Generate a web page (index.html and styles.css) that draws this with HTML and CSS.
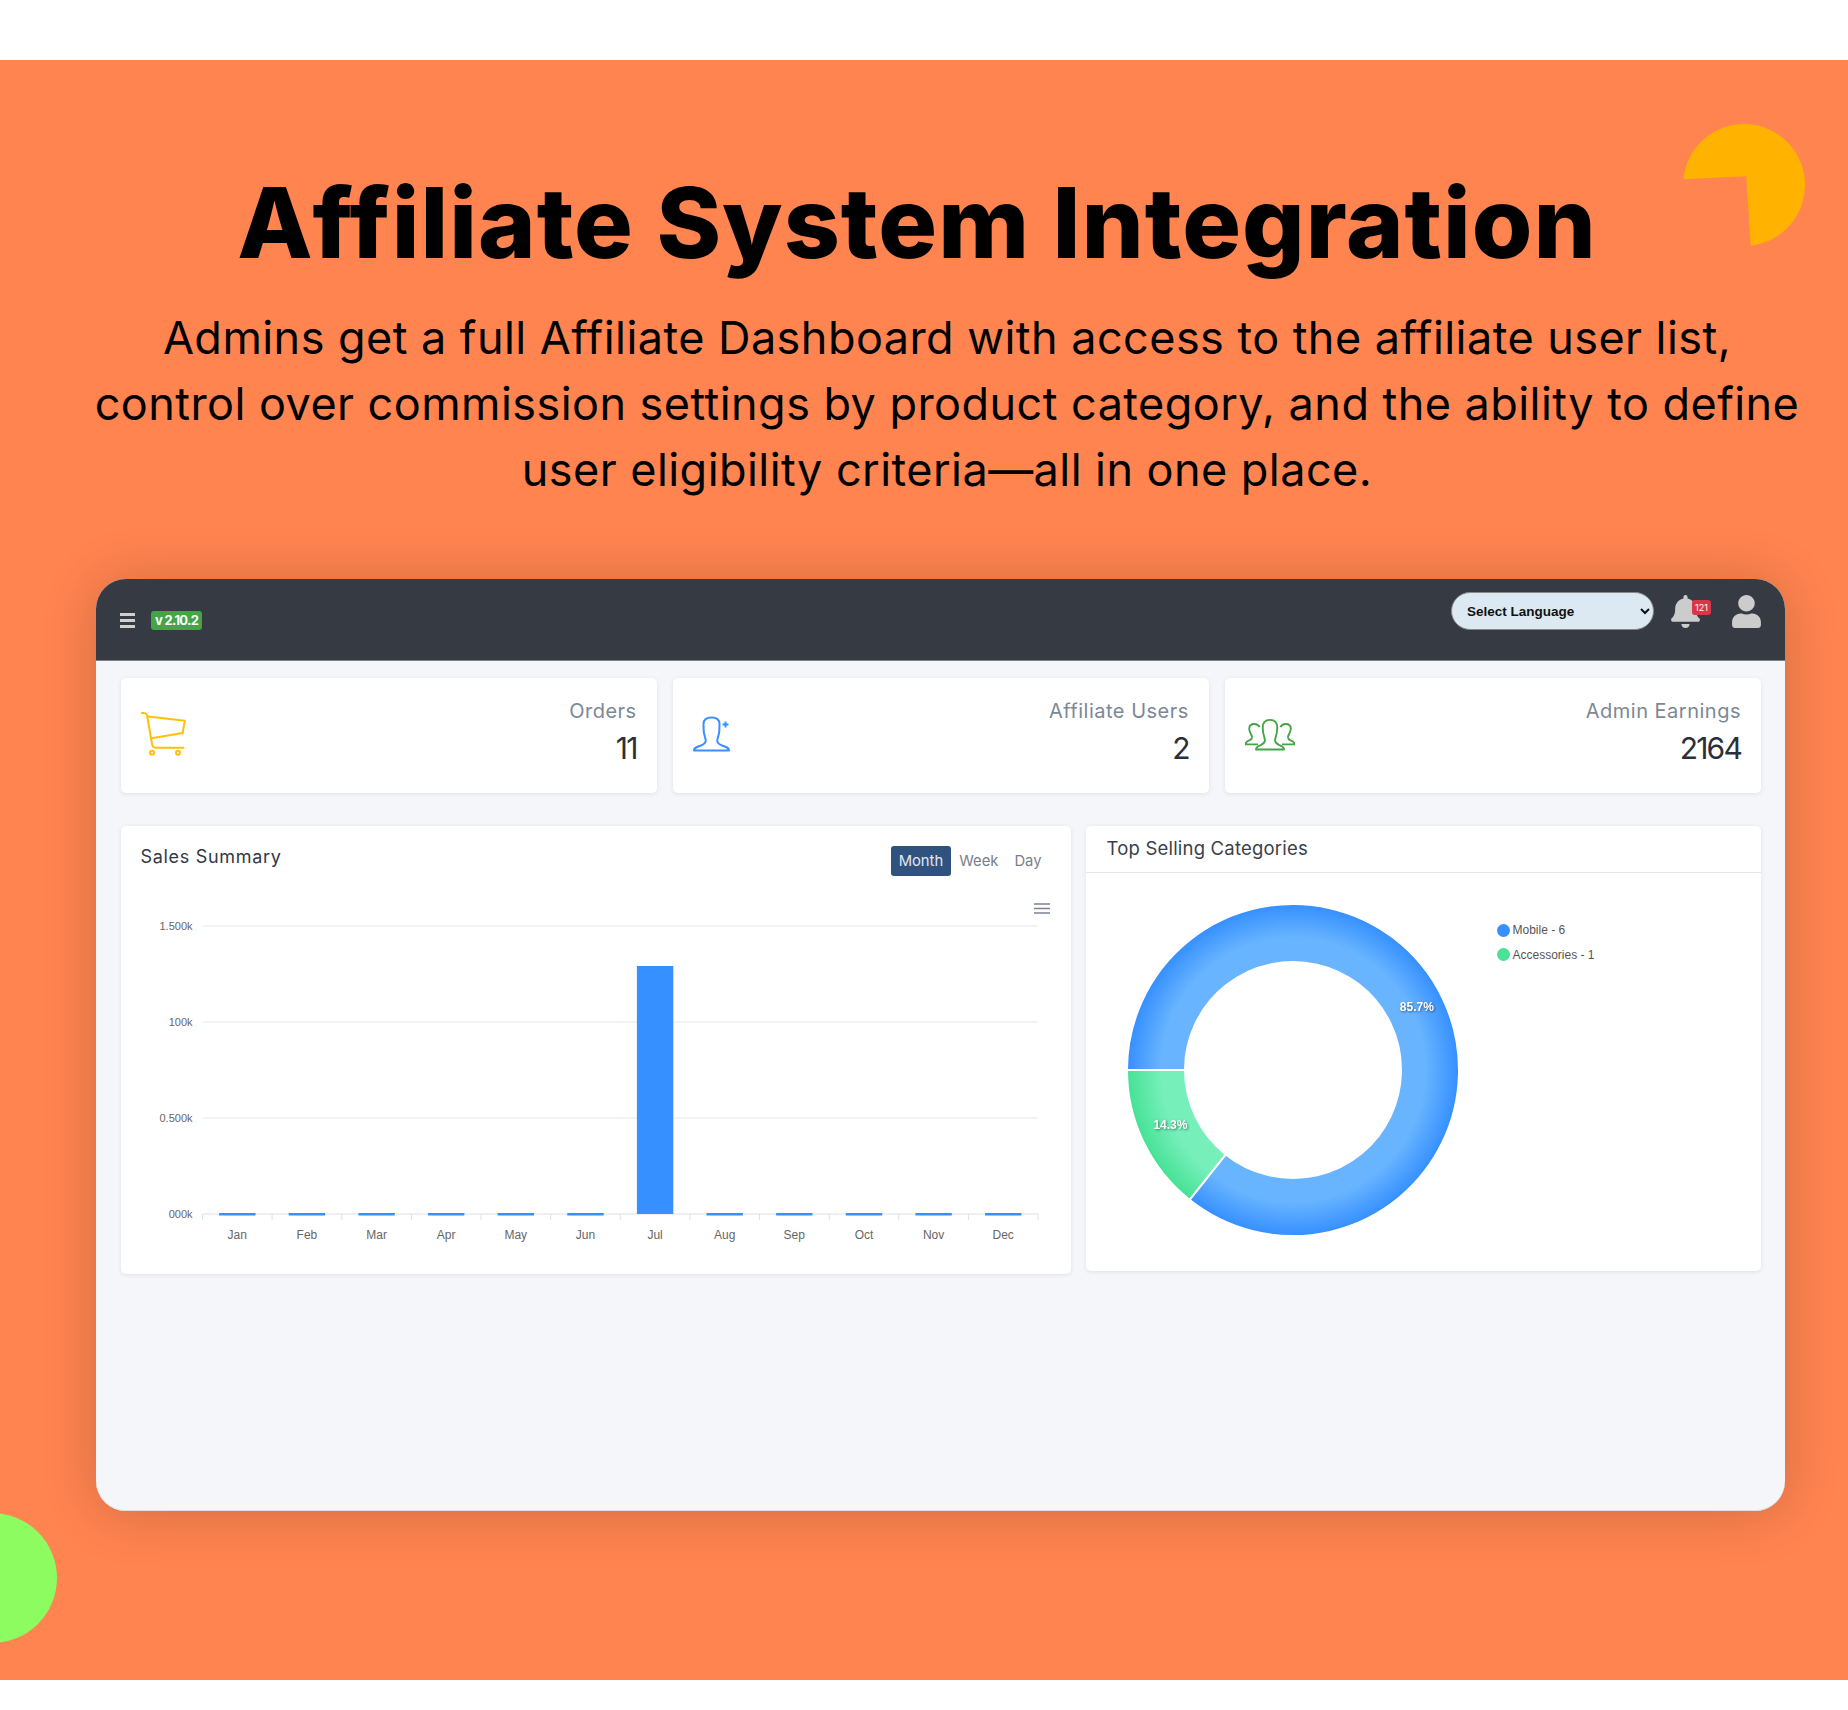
FILE: index.html
```html
<!DOCTYPE html>
<html lang="en">
<head>
    <meta charset="UTF-8">
    <meta name="viewport" content="width=device-width, initial-scale=1.0">
    <title>Affiliate System Integration</title>
    <link rel="stylesheet" href="styles.css">
</head>
<body>
    <section class="hero">
        <svg class="shapeYellow" viewBox="0 0 124 124" width="124" height="124">
            <path d="M63.3 53.3 L0.3 56.3 A61 61 0 1 1 67.7 122.7 Z" fill="#ffb300"/>
        </svg>
        <div class="shapeGreen"></div>

        <h1 class="heroTitle">Affiliate System Integration</h1>
        <p class="heroText">Admins get a full Affiliate Dashboard with access to the affiliate user list,<br>control over commission settings by product category, and the ability to define<br>user eligibility criteria—all in one place.</p>

        <div class="panel">
            <header class="topbar">
                <div class="topbarLeft">
                    <div class="bars"><span></span><span></span><span></span></div>
                    <span class="version">v 2.10.2</span>
                </div>
                <div class="topbarRight">
                    <select class="langSelect">
                        <option>Select Language</option>
                    </select>
                    <div class="bell">
                        <svg viewBox="0 0 448 512" width="29" height="33"><path fill="#cccccc" d="M224 512c35.32 0 63.97-28.65 63.97-64H160.03c0 35.35 28.65 64 63.97 64zm215.39-149.71c-19.32-20.76-55.47-51.99-55.47-154.29 0-77.7-54.48-139.9-127.94-155.16V32c0-17.67-14.32-32-31.98-32s-31.98 14.33-31.98 32v20.84C118.56 68.1 64.08 130.3 64.08 208c0 102.3-36.15 133.53-55.47 154.29-6 6.45-8.66 14.16-8.61 21.71.11 16.4 12.98 32 32.1 32h383.8c19.12 0 32-15.6 32.1-32 .05-7.55-2.61-15.27-8.61-21.71z"/></svg>
                        <span class="bellBadge">121</span>
                    </div>
                    <svg viewBox="0 0 448 512" width="29" height="33"><path fill="#cccccc" d="M224 256c70.7 0 128-57.3 128-128S294.7 0 224 0 96 57.3 96 128s57.3 128 128 128zm89.6 32h-16.7c-22.2 10.2-46.9 16-72.9 16s-50.6-5.8-72.9-16h-16.7C60.2 288 0 348.2 0 422.4V464c0 26.5 21.5 48 48 48h352c26.5 0 48-21.5 48-48v-41.6c0-74.2-60.2-134.4-134.4-134.4z"/></svg>
                </div>
            </header>

            <div class="content">
                <div class="stats">
                    <div class="card statCard">
                        <svg class="statIcon" viewBox="10 12 48 47" width="48" height="47" fill="none" stroke="#ffc107" stroke-width="2" stroke-linecap="round" stroke-linejoin="round">
                            <path d="M11 12.9 C13.5 12.9 15.3 13.2 16 15 L21 44 C21.3 46.5 22.3 47.7 24.5 47.7 L52.5 47.7"/>
                            <path d="M17 16.5 L53.7 20.7 L51.7 33 L20.5 38.3"/>
                            <circle cx="21" cy="52.7" r="2"/>
                            <circle cx="47" cy="52.7" r="2"/>
                        </svg>
                        <div class="statText">
                            <div class="statLabel">Orders</div>
                            <div class="statValue">11</div>
                        </div>
                    </div>
                    <div class="card statCard">
                        <svg class="statIcon" viewBox="8 7 42 44" width="42" height="44" fill="none" stroke="#3690ff" stroke-width="2" stroke-linejoin="round">
                            <path d="M9 43.5 C9 41 11 40 16 38.5 C19.5 37 21 35 20.7 33 C20.3 30 19 28 18.7 24 L18.5 17 C18.5 12.5 21.5 10.5 26.5 10.5 C31.5 10.5 34.5 12.5 34.5 17 L34.3 24 C34 28 32.7 30 32.3 33 C32 35 33.5 37 37 38.5 C42 40 44 41 44 43.5 Z"/>
                            <path d="M37.5 17.5 H43.5 M40.5 14.5 V20.5"/>
                        </svg>
                        <div class="statText">
                            <div class="statLabel">Affiliate Users</div>
                            <div class="statValue">2</div>
                        </div>
                    </div>
                    <div class="card statCard">
                        <svg class="statIcon" viewBox="9.5 5 48 50" width="50" height="52" fill="none" stroke="#43a547" stroke-width="1.8" stroke-linejoin="round">
                            <path d="M20 43 C20 41 21 40 25 38.5 C28 37 29 35 28.5 33 C27.5 30 26.5 27 26.5 22 C26.5 17 29 14.5 33.5 14.5 C38 14.5 40.5 17 40.5 22 C40.5 27 39.5 30 38.5 33 C38 35 39 37 42 38.5 C46 40 47 41 47 43 Z"/>
                            <path d="M22 38 L10 38 C10 36 11 35 14 34 C16.5 33 16.5 32 16 30 C15 28 13.5 25 13.5 23 C13.5 20 15.5 18.5 18.5 18.5 C20.5 18.5 22.5 19.5 23.5 21.5"/>
                            <path d="M45 38 L57 38 C57 36 56 35 53 34 C50.5 33 50.5 32 51 30 C52 28 53.5 25 53.5 23 C53.5 20 51.5 18.5 48.5 18.5 C46.5 18.5 44.5 19.5 43.5 21.5"/>
                        </svg>
                        <div class="statText">
                            <div class="statLabel">Admin Earnings</div>
                            <div class="statValue">2164</div>
                        </div>
                    </div>
                </div>

                <div class="charts">
                    <div class="card salesCard">
                        <div class="salesHead">
                            <h3 class="salesTitle">Sales Summary</h3>
                            <div class="tabs">
                                <span class="tab tabActive">Month</span>
                                <span class="tab">Week</span>
                                <span class="tab">Day</span>
                            </div>
                        </div>
                        <svg class="salesChart" viewBox="0 0 950 398" width="950" height="398">
                            <g class="grid">
                                <path d="M81.5 50 H917 M81.5 146 H917 M81.5 242 H917"/>
                            </g>
                            <g class="axis">
                                <path d="M81.5 338 H917"/>
                                <path d="M81.5 338 v6 M151.1 338 v6 M220.8 338 v6 M290.4 338 v6 M360 338 v6 M429.7 338 v6 M499.3 338 v6 M568.9 338 v6 M638.5 338 v6 M708.2 338 v6 M777.8 338 v6 M847.4 338 v6 M917 338 v6"/>
                            </g>
                            <g class="barSet">
                                <rect x="98.1" y="337" width="36.4" height="2.5"/>
                                <rect x="167.7" y="337" width="36.4" height="2.5"/>
                                <rect x="237.4" y="337" width="36.4" height="2.5"/>
                                <rect x="307" y="337" width="36.4" height="2.5"/>
                                <rect x="376.6" y="337" width="36.4" height="2.5"/>
                                <rect x="446.3" y="337" width="36.4" height="2.5"/>
                                <rect x="515.9" y="90" width="36.4" height="248"/>
                                <rect x="585.5" y="337" width="36.4" height="2.5"/>
                                <rect x="655.1" y="337" width="36.4" height="2.5"/>
                                <rect x="724.8" y="337" width="36.4" height="2.5"/>
                                <rect x="794.4" y="337" width="36.4" height="2.5"/>
                                <rect x="864" y="337" width="36.4" height="2.5"/>
                            </g>
                            <g class="yLabels">
                                <text x="71.5" y="54">1.500k</text>
                                <text x="71.5" y="150">100k</text>
                                <text x="71.5" y="246">0.500k</text>
                                <text x="71.5" y="342">000k</text>
                            </g>
                            <g class="xLabels">
                                <text x="116.3" y="363">Jan</text>
                                <text x="185.9" y="363">Feb</text>
                                <text x="255.6" y="363">Mar</text>
                                <text x="325.2" y="363">Apr</text>
                                <text x="394.8" y="363">May</text>
                                <text x="464.5" y="363">Jun</text>
                                <text x="534.1" y="363">Jul</text>
                                <text x="603.7" y="363">Aug</text>
                                <text x="673.3" y="363">Sep</text>
                                <text x="743" y="363">Oct</text>
                                <text x="812.6" y="363">Nov</text>
                                <text x="882.2" y="363">Dec</text>
                            </g>
                            <path class="chartMenu" d="M913 28 H929 M913 32.5 H929 M913 37 H929"/>
                        </svg>
                    </div>

                    <div class="card topCard">
                        <h3 class="topTitle">Top Selling Categories</h3>
                        <div class="topBody">
                            <svg class="donut" viewBox="0 0 411 398" width="411" height="398">
                                <defs>
                                    <radialGradient id="blueFill" gradientUnits="userSpaceOnUse" cx="207" cy="197" r="165">
                                        <stop offset="0.8" stop-color="#68b4ff"/>
                                        <stop offset="1" stop-color="#3690ff"/>
                                    </radialGradient>
                                    <radialGradient id="greenFill" gradientUnits="userSpaceOnUse" cx="207" cy="197" r="165">
                                        <stop offset="0.8" stop-color="#76efba"/>
                                        <stop offset="1" stop-color="#47e296"/>
                                    </radialGradient>
                                </defs>
                                <path fill="url(#blueFill)" stroke="#fff" stroke-width="2" d="M41 197 A166 166 0 1 1 103.5 326.8 L139.7 281.4 A108 108 0 1 0 99 197 Z"/>
                                <path fill="url(#greenFill)" stroke="#fff" stroke-width="2" d="M41 197 A166 166 0 0 0 103.5 326.8 L139.7 281.4 A108 108 0 0 1 99 197 Z"/>
                                <text class="sliceLabel" x="330.8" y="138">85.7%</text>
                                <text class="sliceLabel" x="84.4" y="256">14.3%</text>
                            </svg>
                            <ul class="legend">
                                <li class="legendItem"><span class="dot dotBlue"></span>Mobile - 6</li>
                                <li class="legendItem"><span class="dot dotGreen"></span>Accessories - 1</li>
                            </ul>
                        </div>
                    </div>
                </div>
            </div>
        </div>
    </section>
</body>
</html>
```

FILE: styles.css
```css
* {
    box-sizing: border-box;
}

body {
    margin: 0;
    background-color: #fff;
    font-family: "Inter", "Liberation Sans", sans-serif;
}

.hero {
    position: relative;
    overflow: hidden;
    height: 1620px;
    margin-top: 60px;
    margin-bottom: 30px;
    padding-top: 108px;
    background-color: #ff8450;
    color: #000;
}

.shapeYellow {
    position: absolute;
    top: 63px;
    left: 1683px;
}

.shapeGreen {
    position: absolute;
    top: 1453px;
    left: -73px;
    width: 130px;
    height: 130px;
    border-radius: 50%;
    background-color: #8cfc60;
}

.heroTitle {
    margin: 0 14px 0 0;
    font-size: 98px;
    font-weight: 800;
    line-height: 110px;
    letter-spacing: 1px;
    text-align: center;
}

.heroText {
    margin: 27px 0 0 46px;
    font-size: 45px;
    font-weight: 400;
    line-height: 66px;
    letter-spacing: 0.45px;
    text-align: center;
    white-space: nowrap;
}

.panel {
    height: 932px;
    margin: 76px 63px 0 96px;
    overflow: hidden;
    border-radius: 30px;
    background-color: #f4f6fa;
    box-shadow: 0 2px 55px rgba(0, 0, 0, 0.18), inset 0 -1px 0 #dde0e6;
}

.topbar {
    display: flex;
    justify-content: space-between;
    height: 82px;
    padding: 13px 24px 0;
    background-color: #363a43;
    border-bottom: 1px solid #7d8086;
}

.topbarLeft {
    display: flex;
    align-items: center;
    gap: 16px;
    height: 19px;
    margin-top: 19px;
}

.bars {
    display: flex;
    flex-direction: column;
    gap: 3px;
    width: 15px;
}

.bars span {
    height: 3px;
    background-color: #d0d0d0;
}

.version {
    padding: 0 4px;
    border-radius: 3px;
    background-color: #43a547;
    color: #fff;
    font-size: 13px;
    font-weight: 700;
    line-height: 19px;
    letter-spacing: -0.7px;
    white-space: nowrap;
}

.topbarRight {
    display: flex;
    align-items: flex-start;
    gap: 32px;
}

.langSelect {
    width: 203px;
    height: 38px;
    margin-right: -15px;
    padding-left: 11px;
    border: 1px solid #888;
    border-radius: 19px;
    background-color: #dce9f2;
    color: #111;
    font-family: "Liberation Sans", sans-serif;
    font-size: 13.5px;
    font-weight: 700;
}

.bell {
    position: relative;
    width: 29px;
    height: 33px;
    margin-top: 3px;
}

.bell svg,
.topbarRight > svg {
    display: block;
}

.topbarRight > svg {
    margin-top: 3px;
}

.bellBadge {
    position: absolute;
    top: 5px;
    left: 21px;
    width: 19px;
    height: 15px;
    border-radius: 3px;
    background-color: #dc3545;
    color: #fff;
    font-size: 9px;
    line-height: 15px;
    text-align: center;
}

.content {
    padding: 17px 24px 0 24.5px;
}

.card {
    border-radius: 5px;
    background-color: #fff;
    box-shadow: 0 1px 4px rgba(40, 50, 70, 0.1);
}

.stats {
    display: grid;
    grid-template-columns: repeat(3, 1fr);
    gap: 16px;
}

.statCard {
    display: flex;
    justify-content: space-between;
    align-items: center;
    height: 115px;
    padding: 0 20px;
}

.statIcon {
    display: block;
    flex-shrink: 0;
}

.statText {
    padding-bottom: 6px;
    text-align: right;
}

.statLabel {
    color: #7d8896;
    font-size: 20px;
    font-weight: 400;
    line-height: 24px;
    letter-spacing: 0.5px;
}

.statValue {
    margin-top: 7px;
    color: #2b2f38;
    font-size: 30px;
    font-weight: 400;
    line-height: 36px;
    letter-spacing: -1.8px;
}

.charts {
    display: grid;
    grid-template-columns: 950px 675px;
    gap: 15px;
    align-items: start;
    margin-top: 33px;
}

.salesCard {
    height: 448px;
}

.salesHead {
    display: flex;
    justify-content: space-between;
    height: 50px;
    padding: 20px 21px 0 20px;
}

.salesTitle {
    margin: 1px 0 0;
    color: #333844;
    font-size: 18px;
    font-weight: 400;
    line-height: 20px;
    letter-spacing: 0.7px;
}

.tabs {
    display: flex;
    height: 30px;
}

.tab {
    padding: 0 8px;
    border-radius: 3px;
    color: #7a8088;
    font-size: 14.8px;
    line-height: 30px;
}

.tabActive {
    background-color: #30527f;
    color: #e4e8ee;
}

.salesChart {
    display: block;
}

.grid path {
    fill: none;
    stroke: #e8e8ea;
    stroke-width: 1.2;
}

.axis path {
    fill: none;
    stroke: #dfe0e4;
    stroke-width: 1;
}

.barSet rect {
    fill: #3690ff;
}

.yLabels text,
.xLabels text {
    fill: #666;
    font-family: "Liberation Sans", sans-serif;
}

.yLabels text {
    font-size: 11px;
    text-anchor: end;
}

.xLabels text {
    font-size: 12px;
    text-anchor: middle;
}

.chartMenu {
    fill: none;
    stroke: #7b8494;
    stroke-width: 1.6;
}

.topCard {
    height: 445px;
}

.topTitle {
    height: 47px;
    margin: 0;
    padding: 11px 21px 0;
    border-bottom: 1px solid #e2e4e8;
    color: #3a3f4a;
    font-size: 18.5px;
    font-weight: 400;
    line-height: 22px;
    letter-spacing: 0.2px;
}

.topBody {
    display: flex;
}

.donut {
    display: block;
    flex-shrink: 0;
}

.sliceLabel {
    fill: #fff;
    font-family: "Liberation Sans", sans-serif;
    font-size: 12px;
    font-weight: 700;
    text-anchor: middle;
    filter: drop-shadow(1px 1px 1px rgba(0, 0, 0, 0.45));
}

.legend {
    margin: 0;
    padding: 45px 0 0;
    list-style: none;
}

.legendItem {
    display: flex;
    align-items: center;
    gap: 3px;
    height: 24.5px;
    color: #555;
    font-family: "Liberation Sans", sans-serif;
    font-size: 12px;
}

.dot {
    width: 13px;
    height: 13px;
    border-radius: 50%;
}

.dotBlue {
    background-color: #3690ff;
}

.dotGreen {
    background-color: #47e296;
}
```
